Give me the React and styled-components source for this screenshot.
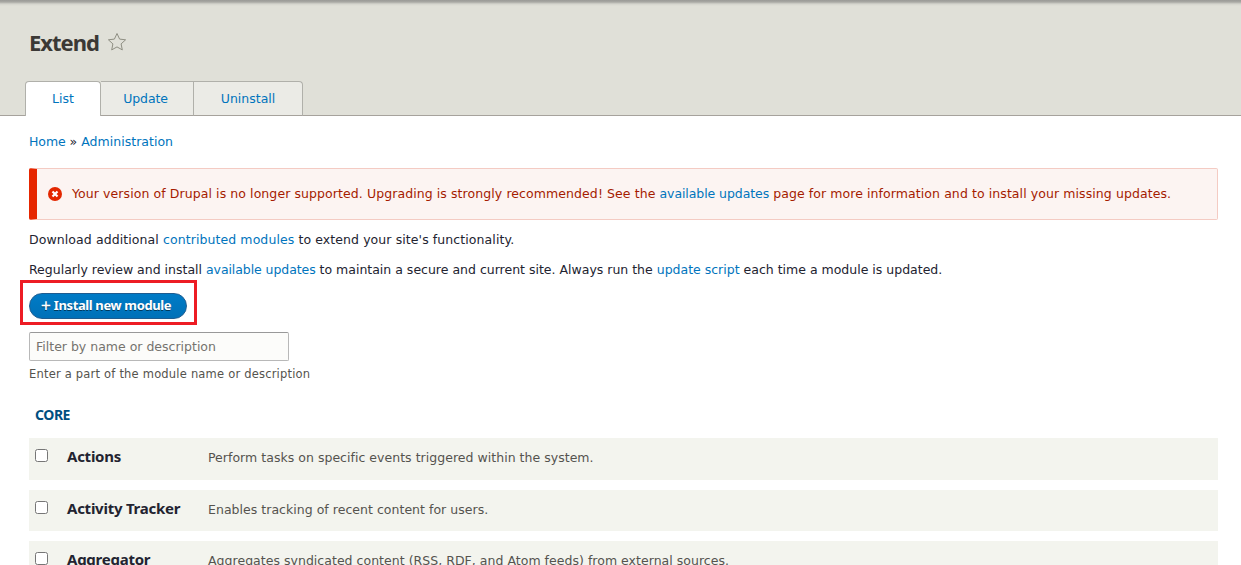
import React from "react";
import styled, { createGlobalStyle } from "styled-components";

const Global = createGlobalStyle`
  html, body { margin: 0; padding: 0; background: #fff; height: 565px; overflow: hidden; }
  body { font-family: "DejaVu Sans", "Noto Sans", sans-serif; font-size: 13px; line-height: 20px; color: #222330; }
  * { box-sizing: border-box; }
`;

const Page = styled.div`
  width: 1241px;
  height: 565px;
  overflow: hidden;
`;
const Header = styled.header`
  height: 116px;
  background: linear-gradient(#9a9a96 0, #a8a8a3 2px, #d4d4cd 4px, #e0e0d8 6px);
  border-bottom: 1px solid #a6a29c;
  padding: 0 29px 0 25px;
  display: flex;
  flex-direction: column;
  justify-content: flex-end;
`;
const TitleRow = styled.div`
  display: flex;
  align-items: center;
  gap: 8px;
  padding-left: 4px;
  height: 30px;
  margin-bottom: 24px;
`;
const Title = styled.h1`
  margin: 0;
  font-family: "Noto Sans", sans-serif;
  font-size: 22px;
  font-weight: 700;
  line-height: 30px;
  letter-spacing: -1px;
  color: #3b3935;
`;
const Tabs = styled.nav`
  display: flex;
  margin-bottom: -1px;
`;
const Tab = styled.a`
  height: 35px;
  width: ${(p) => p.$w}px;
  padding-right: ${(p) => p.$pr || 0}px;
  letter-spacing: ${(p) => p.$spacing || 0}px;
  display: flex;
  align-items: center;
  justify-content: center;
  color: #0074bd;
  font-size: 12.5px;
  background: ${(p) => (p.$active ? "#fff" : "#ebebe6")};
  border: 1px solid #b0b0aa;
  border-left-width: ${(p) => (p.$active ? 1 : 0)}px;
  border-bottom: ${(p) => (p.$active ? "none" : "1px solid #a6a29c")};
  border-radius: ${(p) => (p.$active ? "4px 4px 0 0" : p.$last ? "0 4px 0 0" : "0")};
`;
const Main = styled.main`
  padding: 0 23px 0 29px;
`;
const Breadcrumb = styled.div`
  padding-top: 16px;
  height: 52px;
  font-size: 12.5px;
  color: #222330;
  letter-spacing: 0.02px;
`;
const Link = styled.a`
  color: #0074bd;
  letter-spacing: ${(p) => (p.$tight ? "-0.08px" : "inherit")};
`;
const Alert = styled.div`
  height: 52px;
  display: flex;
  align-items: center;
  gap: 10px;
  padding-left: 11px;
  background: #fcf4f2;
  color: #a51b00;
  border: 1px solid #f4cbc3;
  border-left: 8px solid #e62600;
  border-radius: 2px;
  font-size: 12.5px;
  letter-spacing: 0.083px;
`;
const Para = styled.p`
  margin: 0;
  font-size: 12.5px;
  height: 30px;
  line-height: 20px;
  color: #222330;
  letter-spacing: ${(p) => p.$spacing}px;
  &:first-of-type { margin-top: 10px; }
`;
const ButtonWrap = styled.div`
  margin-top: 3px;
  height: 26px;
`;
const InstallButton = styled.a`
  position: relative;
  display: inline-flex;
  align-items: center;
  justify-content: center;
  gap: 3px;
  width: 158px;
  height: 26px;
  padding: 0 4px 2px 0;
  border-radius: 13px;
  background: linear-gradient(#007bc6, #0071b8);
  border: 1px solid #1e5c90;
  color: #fff;
  font-family: "Noto Sans", sans-serif;
  font-size: 13px;
  font-weight: 700;
  letter-spacing: -0.37px;
  text-shadow: 0 1px rgba(0, 0, 0, 0.5);
  &::after {
    content: "";
    box-sizing: border-box;
    position: absolute;
    left: -10px;
    top: -14px;
    width: 177px;
    height: 45px;
    border: 3px solid #ed1c24;
  }
`;
const PlusSign = styled.span`
  font-size: 18px;
  font-weight: 500;
  line-height: 20px;
`;
const FilterInput = styled.input`
  display: block;
  margin-top: 13px;
  width: 260px;
  height: 29px;
  padding: 0 6px;
  background: #fcfcfa;
  border: 1px solid #b8b8b8;
  border-top-color: #999;
  border-radius: 2px;
  font: 12.5px "DejaVu Sans", sans-serif;
  &::placeholder { color: #75736e; opacity: 1; }
`;
const Hint = styled.div`
  margin-top: 4px;
  font-size: 11.5px;
  letter-spacing: 0.2px;
  line-height: 18px;
  color: #55534e;
`;
const GroupTitle = styled.h2`
  margin: 22px 0 0 6px;
  font-family: "Noto Sans", sans-serif;
  font-size: 14px;
  line-height: 20px;
  font-weight: 700;
  letter-spacing: -0.45px;
  color: #004f80;
`;
const Rows = styled.div`
  margin-top: 13px;
  display: flex;
  flex-direction: column;
  gap: 10px;
`;
const Row = styled.div`
  height: 41px;
  background: #f3f4ee;
  display: flex;
  align-items: center;
  flex-shrink: 0;
  &:first-child { height: 42px; }
`;
const Check = styled.input.attrs({ type: "checkbox" })`
  margin: 0 0 7px 6px;
  width: 13px;
  height: 13px;
  flex: none;
`;
const Name = styled.span`
  margin-left: 19px;
  margin-bottom: 6px;
  width: 141px;
  flex: none;
  font-family: "Noto Sans", sans-serif;
  font-size: 15px;
  font-weight: 700;
  letter-spacing: -0.25px;
  color: #222330;
`;
const Desc = styled.span`
  font-size: 12.5px;
  letter-spacing: 0.03px;
  margin-bottom: 2px;
  color: #55534e;
`;

const Star = () => (
  <svg width="20" height="20" viewBox="0 0 20 20" fill="none" stroke="#8e8e82" strokeWidth="1">
    <path d="M10 1.5l2.6 5.6 6 .7-4.5 4.1 1.2 6L10 14.9l-5.3 3 1.2-6L1.4 7.8l6-.7z" />
  </svg>
);
const ErrorIcon = () => (
  <svg width="14" height="14" viewBox="0 0 14 14">
    <circle cx="7" cy="7" r="7" fill="#e32700" />
    <path d="M4.5 4.5l5 5M9.5 4.5l-5 5" stroke="#fff" strokeWidth="2.2" />
  </svg>
);

const modules = [
  ["Actions", "Perform tasks on specific events triggered within the system."],
  ["Activity Tracker", "Enables tracking of recent content for users."],
  ["Aggregator", "Aggregates syndicated content (RSS, RDF, and Atom feeds) from external sources."],
];

export default function App() {
  return (
    <Page>
      <Global />
      <Header>
        <TitleRow>
          <Title>Extend</Title>
          <Star />
        </TitleRow>
        <Tabs>
          <Tab $w={76} $active>List</Tab>
          <Tab $w={93} $pr={3} $spacing={-0.15}>Update</Tab>
          <Tab $w={109} $last>Uninstall</Tab>
        </Tabs>
      </Header>
      <Main>
        <Breadcrumb>
          <Link $tight>Home</Link> » <Link>Administration</Link>
        </Breadcrumb>
        <Alert>
          <ErrorIcon />
          <span>
            Your version of Drupal is no longer supported. Upgrading is strongly recommended! See the{" "}
            <Link $tight>available updates</Link> page for more information and to install your missing updates.
          </span>
        </Alert>
        <Para $spacing={0.09}>
          Download additional <Link>contributed modules</Link> to extend your site's functionality.
        </Para>
        <Para $spacing={0}>
          Regularly review and install <Link $tight>available updates</Link> to maintain a secure and current site. Always run
          the <Link>update script</Link> each time a module is updated.
        </Para>
        <ButtonWrap>
          <InstallButton>
            <PlusSign>+</PlusSign>
            <span>Install new module</span>
          </InstallButton>
        </ButtonWrap>
        <FilterInput placeholder="Filter by name or description" />
        <Hint>Enter a part of the module name or description</Hint>
        <GroupTitle>CORE</GroupTitle>
        <Rows>
          {modules.map(([n, d]) => (
            <Row key={n}>
              <Check />
              <Name>{n}</Name>
              <Desc>{d}</Desc>
            </Row>
          ))}
        </Rows>
      </Main>
    </Page>
  );
}
